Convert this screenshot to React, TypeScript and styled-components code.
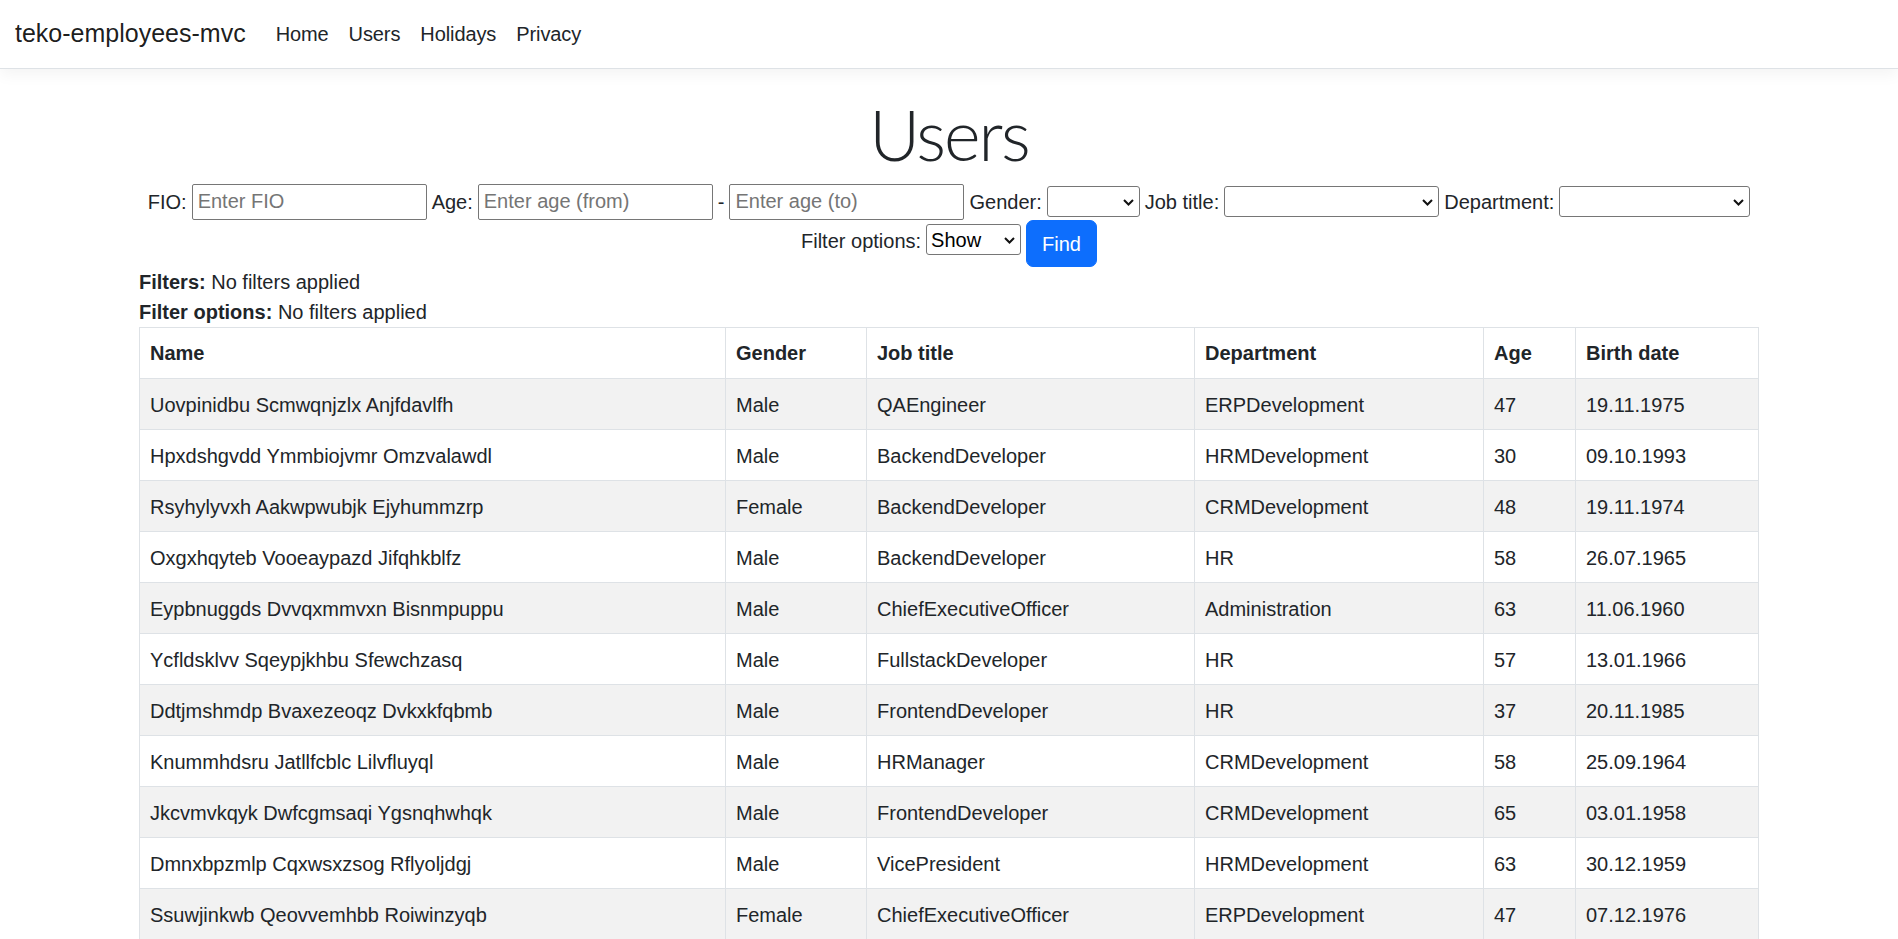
import React from "react";
import styled, { createGlobalStyle } from "styled-components";

const GlobalStyle = createGlobalStyle`
  *, *::before, *::after { box-sizing: border-box; }
  html, body { margin: 0; padding: 0; background: #fff; }
  body {
    font-family: "Liberation Sans", Arial, sans-serif;
    font-size: 20px;
    line-height: 1.5;
    color: #212529;
  }
`;

const NavBar = styled.header`
  height: 69px;
  border-bottom: 1px solid #dee2e6;
  box-shadow: 0 5px 15px rgba(0, 0, 0, 0.05);
  background: #fff;
  margin-bottom: 20px;
`;

const NavInner = styled.nav`
  height: 68px;
  padding: 0 15px;
  display: flex;
  align-items: center;
`;

const Brand = styled.a`
  font-size: 25px;
  line-height: 37.5px;
  color: rgba(0, 0, 0, 0.9);
  text-decoration: none;
  margin-right: 20px;
  white-space: nowrap;
`;

const NavList = styled.ul`
  display: flex;
  list-style: none;
  margin: 0;
  padding: 0;
`;

const NavLink = styled.a`
  display: block;
  padding: 10px;
  line-height: 30px;
  color: #212529;
  text-decoration: none;
  letter-spacing: -0.1px;
`;

const Container = styled.main`
  max-width: 1650px;
  margin: 0 auto;
  padding: 0 15px;
`;

const Title = styled.h1`
  margin: 0 0 7px;
  padding-top: 3px;
  text-align: center;
  font-family: Lato, "Liberation Sans", sans-serif;
  font-weight: 300;
  font-size: 70px;
  line-height: 84px;
  letter-spacing: -2px;
  color: #212529;
`;

const FormRow = styled.div<{ $h: number; $align: string }>`
  display: flex;
  justify-content: center;
  align-items: ${(p) => p.$align};
  gap: 5px;
  height: ${(p) => p.$h}px;
`;

const Label = styled.label<{ $mt?: number }>`
  line-height: 30px;
  white-space: nowrap;
  margin-top: ${(p) => p.$mt ?? 0}px;
`;

const TextInput = styled.input`
  width: 235px;
  height: 36px;
  padding: 1px 5px;
  border: 1px solid #767676;
  border-radius: 2px;
  font: inherit;
  color: #212529;
  background: #fff;
  &::placeholder { color: #757575; }
`;

const SelectWrap = styled.span<{ $w: number; $mt?: number }>`
  position: relative;
  display: inline-block;
  width: ${(p) => p.$w}px;
  margin-top: ${(p) => p.$mt ?? 0}px;
`;

const Select = styled.select<{ $h: number }>`
  appearance: none;
  -webkit-appearance: none;
  width: 100%;
  height: ${(p) => p.$h}px;
  padding: 0 24px 0 4px;
  border: 1px solid #767676;
  border-radius: 3px;
  background: #fff;
  font: inherit;
  line-height: 28px;
  color: #000;
`;

const Chevron = styled.svg`
  position: absolute;
  right: 6px;
  top: 50%;
  margin-top: -3px;
  pointer-events: none;
`;

const FindButton = styled.button`
  height: 47px;
  padding: 7px 15px;
  border: 1px solid #0d6efd;
  border-radius: 7px;
  background: #0d6efd;
  color: #fff;
  font: inherit;
  line-height: 30px;
`;

const InfoLine = styled.div`
  line-height: 30px;
  & b { font-weight: 700; }
`;

const Table = styled.table`
  width: 100%;
  border-collapse: collapse;
  table-layout: fixed;
  border: 1px solid #dee2e6;
`;

const HeadCell = styled.th`
  text-align: left;
  font-weight: 700;
  padding: 10px;
  line-height: 30px;
  border: 1px solid #dee2e6;
  white-space: nowrap;
`;

const Row = styled.tr<{ $striped: boolean }>`
  background: ${(p) => (p.$striped ? "#f2f2f2" : "#fff")};
`;

const Cell = styled.td`
  padding: 11px 10px 9px;
  line-height: 30px;
  border: 1px solid #dee2e6;
  white-space: nowrap;
  vertical-align: top;
`;

const ChevronIcon = () => (
  <Chevron width="11" height="7" viewBox="0 0 11 7">
    <path d="M1 1 L5.5 5.5 L10 1" fill="none" stroke="#111" strokeWidth="2" />
  </Chevron>
);

const Dropdown = ({ w, h, mt, options }: { w: number; h: number; mt?: number; options: string[] }) => (
  <SelectWrap $w={w} $mt={mt}>
    <Select $h={h}>
      {options.map((o) => (
        <option key={o}>{o}</option>
      ))}
    </Select>
    <ChevronIcon />
  </SelectWrap>
);

const columns: { title: string; width: number }[] = [
  { title: "Name", width: 586 },
  { title: "Gender", width: 141 },
  { title: "Job title", width: 328 },
  { title: "Department", width: 289 },
  { title: "Age", width: 92 },
  { title: "Birth date", width: 183 },
];

const users: string[][] = [
  ["Uovpinidbu Scmwqnjzlx Anjfdavlfh", "Male", "QAEngineer", "ERPDevelopment", "47", "19.11.1975"],
  ["Hpxdshgvdd Ymmbiojvmr Omzvalawdl", "Male", "BackendDeveloper", "HRMDevelopment", "30", "09.10.1993"],
  ["Rsyhylyvxh Aakwpwubjk Ejyhummzrp", "Female", "BackendDeveloper", "CRMDevelopment", "48", "19.11.1974"],
  ["Oxgxhqyteb Vooeaypazd Jifqhkblfz", "Male", "BackendDeveloper", "HR", "58", "26.07.1965"],
  ["Eypbnuggds Dvvqxmmvxn Bisnmpuppu", "Male", "ChiefExecutiveOfficer", "Administration", "63", "11.06.1960"],
  ["Ycfldsklvv Sqeypjkhbu Sfewchzasq", "Male", "FullstackDeveloper", "HR", "57", "13.01.1966"],
  ["Ddtjmshmdp Bvaxezeoqz Dvkxkfqbmb", "Male", "FrontendDeveloper", "HR", "37", "20.11.1985"],
  ["Knummhdsru Jatllfcblc Lilvfluyql", "Male", "HRManager", "CRMDevelopment", "58", "25.09.1964"],
  ["Jkcvmvkqyk Dwfcgmsaqi Ygsnqhwhqk", "Male", "FrontendDeveloper", "CRMDevelopment", "65", "03.01.1958"],
  ["Dmnxbpzmlp Cqxwsxzsog Rflyoljdgj", "Male", "VicePresident", "HRMDevelopment", "63", "30.12.1959"],
  ["Ssuwjinkwb Qeovvemhbb Roiwinzyqb", "Female", "ChiefExecutiveOfficer", "ERPDevelopment", "47", "07.12.1976"],
];

export default function App() {
  return (
    <>
      <GlobalStyle />
      <NavBar>
        <NavInner>
          <Brand href="#">teko-employees-mvc</Brand>
          <NavList>
            {["Home", "Users", "Holidays", "Privacy"].map((l) => (
              <li key={l}>
                <NavLink href="#">{l}</NavLink>
              </li>
            ))}
          </NavList>
        </NavInner>
      </NavBar>
      <Container>
        <Title>Users</Title>
        <FormRow $h={37} $align="center">
          <Label>FIO:</Label>
          <TextInput placeholder="Enter FIO" />
          <Label>Age:</Label>
          <TextInput placeholder="Enter age (from)" />
          <Label>-</Label>
          <TextInput placeholder="Enter age (to)" />
          <Label>Gender:</Label>
          <Dropdown w={93} h={31} options={[""]} />
          <Label>Job title:</Label>
          <Dropdown w={215} h={31} options={[""]} />
          <Label>Department:</Label>
          <Dropdown w={191} h={31} options={[""]} />
        </FormRow>
        <FormRow $h={47} $align="flex-start">
          <Label $mt={6}>Filter options:</Label>
          <Dropdown w={95} h={31} mt={4} options={["Show", "Hide"]} />
          <FindButton type="button">Find</FindButton>
        </FormRow>
        <InfoLine>
          <b>Filters:</b> No filters applied
        </InfoLine>
        <InfoLine>
          <b>Filter options:</b> No filters applied
        </InfoLine>
        <Table>
          <colgroup>
            {columns.map((c) => (
              <col key={c.title} style={{ width: c.width }} />
            ))}
          </colgroup>
          <thead>
            <tr>
              {columns.map((c) => (
                <HeadCell key={c.title}>{c.title}</HeadCell>
              ))}
            </tr>
          </thead>
          <tbody>
            {users.map((u, i) => (
              <Row key={i} $striped={i % 2 === 0}>
                {u.map((v, j) => (
                  <Cell key={j}>{v}</Cell>
                ))}
              </Row>
            ))}
          </tbody>
        </Table>
      </Container>
    </>
  );
}
